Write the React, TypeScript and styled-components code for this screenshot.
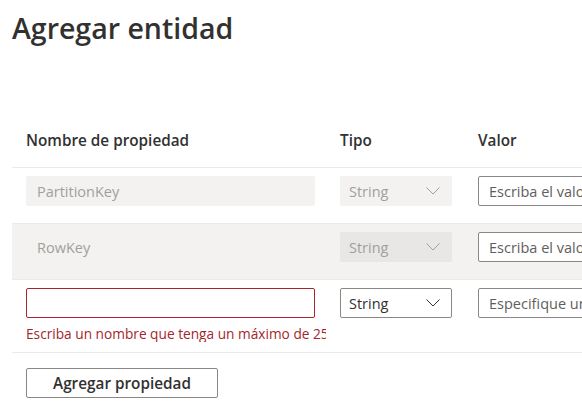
import styled, { createGlobalStyle } from 'styled-components'

const GlobalStyle = createGlobalStyle`
  html, body {
    margin: 0;
    padding: 0;
    background: #ffffff;
    font-family: "Open Sans", "Noto Sans", sans-serif;
    color: #323130;
    overflow: hidden;
  }
`

const Chevron = ({ disabled }: { disabled?: boolean }) => (
  <svg width="14" height="8" viewBox="0 0 14 8" fill="none">
    <path
      d="M0.5 0.5 L7 7 L13.5 0.5"
      stroke={disabled ? '#a19f9d' : '#323130'}
      strokeWidth="1"
    />
  </svg>
)

interface IRow {
  name: string
  type: string
  placeholder: string
  hovered?: boolean
}

const rows: IRow[] = [
  { name: 'PartitionKey', type: 'String', placeholder: 'Escriba el valor' },
  { name: 'RowKey', type: 'String', placeholder: 'Escriba el valor', hovered: true },
]

const App = () => {
  return (
    <Styled.Page>
      <GlobalStyle />
      <Styled.Title>Agregar entidad</Styled.Title>

      <Styled.Table>
        <Styled.Row>
          <Styled.NameCell>
            <Styled.HeadText>Nombre de propiedad</Styled.HeadText>
          </Styled.NameCell>
          <Styled.TypeCell>
            <Styled.HeadText>Tipo</Styled.HeadText>
          </Styled.TypeCell>
          <Styled.ValueCell>
            <Styled.HeadText>Valor</Styled.HeadText>
          </Styled.ValueCell>
        </Styled.Row>

        {rows.map((row) => (
          <Styled.Row key={row.name} $body $hovered={row.hovered}>
            <Styled.NameCell>
              <Styled.Input $disabled value={row.name} disabled readOnly />
            </Styled.NameCell>
            <Styled.TypeCell>
              <Styled.Dropdown $disabled $hovered={row.hovered}>
                {row.type}
                <Chevron disabled />
              </Styled.Dropdown>
            </Styled.TypeCell>
            <Styled.ValueCell>
              <Styled.Input placeholder={row.placeholder} $wide />
            </Styled.ValueCell>
          </Styled.Row>
        ))}

        <Styled.Row $body $tall>
          <Styled.NameCell>
            <Styled.Input $error />
            <Styled.ErrorText>
              Escriba un nombre que tenga un máximo de 255 caracteres.
            </Styled.ErrorText>
          </Styled.NameCell>
          <Styled.TypeCell>
            <Styled.Dropdown>
              String
              <Chevron />
            </Styled.Dropdown>
          </Styled.TypeCell>
          <Styled.ValueCell>
            <Styled.Input placeholder="Especifique un valor" $wide />
          </Styled.ValueCell>
        </Styled.Row>
      </Styled.Table>

      <Styled.Actions>
        <Styled.Button>Agregar propiedad</Styled.Button>
      </Styled.Actions>
    </Styled.Page>
  )
}

export default App

const Styled = {
  Page: styled.div`
    padding: 10px 0 0 12px;
    width: 700px;
  `,
  Title: styled.h1`
    margin: 0;
    font-size: 28.5px;
    line-height: 36px;
    font-weight: 600;
    color: #323130;
  `,
  Table: styled.div`
    margin-top: 66px;
    display: flex;
    flex-direction: column;
  `,
  Row: styled.div<{ $body?: boolean; $hovered?: boolean; $tall?: boolean }>`
    display: flex;
    align-items: ${(p) => (p.$body ? 'flex-start' : 'center')};
    height: ${(p) => (p.$tall ? '73px' : '56px')};
    box-sizing: border-box;
    padding-top: ${(p) => (p.$body ? '8px' : '0')};
    border-bottom: 1px solid #edebe9;
    background: ${(p) => (p.$hovered ? '#f3f2f1' : 'transparent')};
  `,
  NameCell: styled.div`
    width: 314px;
    flex: none;
    padding-left: 14px;
    box-sizing: border-box;
    overflow: hidden;
  `,
  TypeCell: styled.div`
    width: 138px;
    flex: none;
    padding-left: 14px;
    box-sizing: border-box;
  `,
  ValueCell: styled.div`
    flex: 1;
    padding-left: 14px;
    box-sizing: border-box;
  `,
  HeadText: styled.div`
    font-size: 15.3px;
    font-weight: 600;
    color: #323130;
    white-space: nowrap;
  `,
  Input: styled.input<{ $disabled?: boolean; $error?: boolean; $wide?: boolean }>`
    display: block;
    box-sizing: border-box;
    width: ${(p) => (p.$wide ? '200px' : '289px')};
    height: 30px;
    padding: 0 10px;
    font-family: inherit;
    font-size: 14.5px;
    color: #323130;
    border-radius: 2px;
    outline: none;
    border: 1px solid
      ${(p) => (p.$error ? '#a4262c' : p.$disabled ? 'transparent' : '#8a8886')};
    background: ${(p) => (p.$disabled ? '#f3f2f1' : '#ffffff')};
    &:disabled {
      color: #a19f9d;
    }
    &::placeholder {
      color: #605e5c;
    }
  `,
  Dropdown: styled.div<{ $disabled?: boolean; $hovered?: boolean }>`
    box-sizing: border-box;
    width: 112px;
    height: 30px;
    display: flex;
    align-items: center;
    justify-content: space-between;
    padding: 0 11px 0 8px;
    font-size: 14.5px;
    border-radius: 2px;
    color: ${(p) => (p.$disabled ? '#a19f9d' : '#323130')};
    border: 1px solid ${(p) => (p.$disabled ? 'transparent' : '#8a8886')};
    background: ${(p) => (p.$disabled ? (p.$hovered ? '#e8e7e6' : '#f3f2f1') : '#ffffff')};
  `,
  ErrorText: styled.div`
    margin-top: 8px;
    font-size: 13.7px;
    line-height: 16px;
    color: #a4262c;
    white-space: nowrap;
    width: 300px;
    overflow: hidden;
  `,
  Actions: styled.div`
    padding: 15px 0 0 14px;
  `,
  Button: styled.button`
    box-sizing: border-box;
    width: 192px;
    height: 30px;
    font-family: inherit;
    font-size: 15.3px;
    font-weight: 600;
    color: #323130;
    background: #ffffff;
    border: 1px solid #8a8886;
    border-radius: 2px;
  `,
}
